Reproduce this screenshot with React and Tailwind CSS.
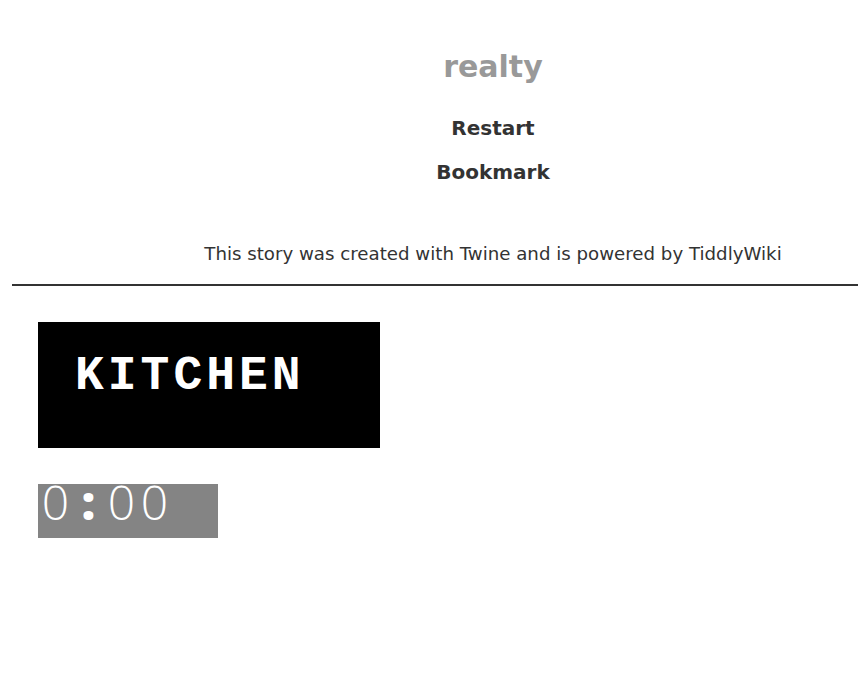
import React from "react";

const Header = () => {
  return (
    <header className="pl-[128px] text-center">
      <h1 className="pt-[44px] text-[30px] font-bold leading-[46px] text-[#999999] font-['DejaVu_Sans',Verdana,sans-serif]">
        realty
      </h1>
      <nav className="mt-[25px] flex flex-col items-center gap-[18px] text-[20px] font-bold text-[#333333] font-['DejaVu_Sans',Verdana,sans-serif]">
        <a className="leading-[26px] cursor-pointer">Restart</a>
        <a className="leading-[26px] cursor-pointer">Bookmark</a>
      </nav>
      <p className="mt-[56px] text-[18.2px] leading-[26px] text-[#333333] font-['DejaVu_Sans',Verdana,sans-serif]">
        This story was created with Twine and is powered by TiddlyWiki
      </p>
    </header>
  );
};

const Timer = ({ value }) => {
  // fixed pitch per character, like a clock face
  return (
    <div className="mt-[36px] flex h-[54px] w-[180px] items-start bg-[#848484]">
      <div className="ml-[1px] -mt-[6px] flex text-[48px] font-light leading-[48px] text-white font-['Open_Sans',sans-serif]">
        {value.split("").map((ch, i) => (
          <span
            key={i}
            className={ch === ":" ? "w-[33px] text-center font-extrabold" : "w-[33px] text-center"}
          >
            {ch}
          </span>
        ))}
      </div>
    </div>
  );
};

const App = () => {
  return (
    <div className="min-h-[690px] bg-white">
      <Header />
      <hr className="ml-[12px] mt-[17px] border-t-2 border-[#333333]" />
      <main className="px-[38px] pt-[36px]">
        <div className="flex h-[126px] w-[342px] bg-black pl-[37px] pt-[24px]">
          <span className="text-[48px] font-bold leading-[60px] tracking-[4px] text-white font-['Liberation_Mono','Courier_New',monospace]">
            KITCHEN
          </span>
        </div>
        <Timer value="0:00" />
      </main>
    </div>
  );
};

export default App;
